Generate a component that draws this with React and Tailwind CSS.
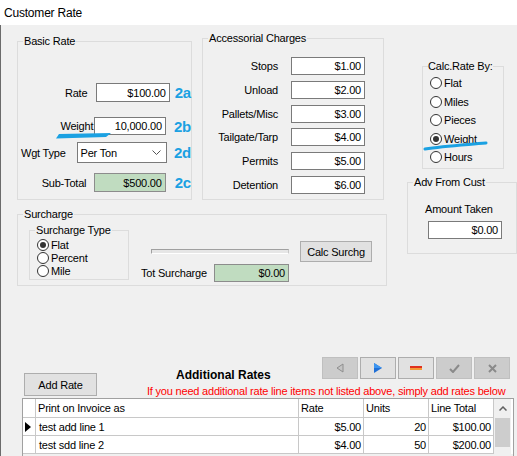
import React from 'react';

function Legend({ children }) {
  return <legend className="ml-[5px] px-[1px] leading-[14px]">{children}</legend>;
}

function Box({ value, className = '', green }) {
  return (
    <div className={`flex items-center justify-end border pr-[3px] ${green ? 'bg-[#c0dcc0] border-[#8c8c8c]' : 'bg-white border-[#7a7a7a]'} ${className}`}>
      {value}
    </div>
  );
}

function Radio({ label, checked, className = '' }) {
  return (
    <div className={`flex items-center ${className}`}>
      <span className="w-[12px] h-[12px] rounded-full border border-[#333333] bg-white flex items-center justify-center shrink-0">
        {checked && <span className="w-[6px] h-[6px] rounded-full bg-[#333333]" />}
      </span>
      <span className="ml-[2px]">{label}</span>
    </div>
  );
}

function Mark({ children, className = '' }) {
  return <span className={`font-bold text-[15px] leading-none text-[#1ba1e2] ${className}`}>{children}</span>;
}

function NavButton({ enabled, children }) {
  return (
    <div className={`w-[36px] h-[22px] border flex items-center justify-center ${enabled ? 'bg-[#e1e1e1] border-[#adadad]' : 'bg-[#cccccc] border-[#bfbfbf]'}`}>
      {children}
    </div>
  );
}

const accessorials = [
  ['Stops', '$1.00'],
  ['Unload', '$2.00'],
  ['Pallets/Misc', '$3.00'],
  ['Tailgate/Tarp', '$4.00'],
  ['Permits', '$5.00'],
  ['Detention', '$6.00'],
];

const rows = [
  { text: 'test add line 1', rate: '$5.00', units: '20', total: '$100.00', current: true },
  { text: 'test sdd line 2', rate: '$4.00', units: '50', total: '$200.00' },
];

export default function App() {
  return (
    <div className="relative w-[517px] h-[456px] overflow-hidden bg-white text-black text-[11px] tracking-[-0.2px] font-['Liberation_Sans',Arial,sans-serif]">
      {/* Title */}
      <div className="h-[25px] bg-white flex items-center pl-[4px] text-[12px] tracking-[-0.2px]">Customer Rate</div>

      <div className="h-[431px] bg-[#f0f0f0] border-l border-[#6b6b6b] pl-[16px] leading-[14px]">
        <div className="flex items-start">
          {/* Left column */}
          <div className="w-[370px]">
            <div className="flex items-start">
              <fieldset className="w-[175px] h-[166px] mt-[9px] border border-[#dcdcdc] min-w-0">
                <Legend>Basic Rate</Legend>
                <div className="flex items-center h-[19px] mt-[35px]">
                  <div className="w-[79px] text-right pr-[9px]">Rate</div>
                  <Box value="$100.00" className="w-[74px] h-[19px]" />
                  <Mark className="ml-[5px]">2a</Mark>
                </div>
                <div className="flex items-center h-[18px] mt-[15px]">
                  <div className="w-[79px] text-right pr-[1px]">Weight</div>
                  <Box value="10,000.00" className="w-[74px] h-[18px]" />
                  <Mark className="ml-[8px]">2b</Mark>
                </div>
                <div className="flex items-center h-[21px] mt-[7px]">
                  <div className="w-[61px] pl-[3px]">Wgt Type</div>
                  <div className="w-[94px] h-[21px] bg-white border border-[#7a7a7a] flex items-center pl-[3px] pr-[5px]">
                    <span className="flex-1">Per Ton</span>
                    <svg width="9" height="6" viewBox="0 0 9 6">
                      <polyline points="0.5,0.5 4.5,4.5 8.5,0.5" fill="none" stroke="#555" strokeWidth="1" />
                    </svg>
                  </div>
                  <Mark className="ml-[7px]">2d</Mark>
                </div>
                <div className="flex items-center h-[19px] mt-[10px]">
                  <div className="w-[79px] text-right pr-[8px]">Sub-Total</div>
                  <Box value="$500.00" green className="w-[74px] h-[19px]" />
                  <Mark className="ml-[9px]">2c</Mark>
                </div>
              </fieldset>

              <fieldset className="w-[182px] h-[169px] mt-[6px] ml-[10px] border border-[#dcdcdc] min-w-0">
                <Legend>Accessorial Charges</Legend>
                <div className="flex flex-col gap-[5.8px] mt-[12px]">
                  {accessorials.map(([label, value]) => (
                    <div key={label} className="flex items-center h-[18px]">
                      <div className="w-[88px] text-right pr-[13px]">{label}</div>
                      <Box value={value} className="w-[74px] h-[18px]" />
                    </div>
                  ))}
                </div>
              </fieldset>
            </div>

            <fieldset className="w-[370px] h-[79px] mt-[7px] border border-[#dcdcdc] min-w-0">
              <Legend>Surcharge</Legend>
              <div className="flex items-start">
                <fieldset className="w-[100px] h-[57px] ml-[11px] mt-[2px] border border-[#dcdcdc] min-w-0">
                  <Legend>Surcharge Type</Legend>
                  <div className="pl-[7px] mt-[1.5px]">
                    <Radio label="Flat" checked className="h-[13px]" />
                    <Radio label="Percent" className="h-[13px]" />
                    <Radio label="Mile" className="h-[13px]" />
                  </div>
                </fieldset>
                <div className="ml-[12px] mt-[20px]">
                  <div className="flex items-start h-[21px]">
                    <div className="ml-[10px] mt-[8px] w-[138px] h-[5px] border-t border-l border-[#a0a0a0] border-b border-r border-b-white border-r-[#c8c8c8] bg-[#e6e6e6]" />
                    <div className="ml-[11px] w-[72px] h-[21px] bg-[#e1e1e1] border border-[#adadad] flex items-center justify-center">Calc Surchg</div>
                  </div>
                  <div className="flex items-center h-[18px] mt-[2px]">
                    <div className="w-[73px]">Tot Surcharge</div>
                    <Box value="$0.00" green className="w-[75px] h-[18px]" />
                  </div>
                </div>
              </div>
            </fieldset>
          </div>

          {/* Right column */}
          <div className="ml-[20px] w-[110px]">
            <fieldset className="w-[82px] h-[110px] ml-[15px] mt-[34px] border border-[#dcdcdc] min-w-0">
              <legend className="ml-[5px] leading-[14px]">Calc.Rate By:</legend>
              <div className="pl-[7px] mt-[1px]">
                {['Flat', 'Miles', 'Pieces', 'Weight', 'Hours'].map((r) => (
                  <Radio key={r} label={r} checked={r === 'Weight'} className="h-[18.5px]" />
                ))}
              </div>
            </fieldset>
            <fieldset className="w-[110px] h-[79px] mt-[6px] border border-[#dcdcdc] min-w-0">
              <Legend>Adv From Cust</Legend>
              <div className="pl-[17px] mt-[13px]">Amount Taken</div>
              <Box value="$0.00" className="ml-[20px] mt-[5px] w-[74px] h-[18px]" />
            </fieldset>
          </div>
        </div>

        {/* Additional rates */}
        <div className="flex items-start mt-[71px]">
          <div className="ml-[7px] mt-[16px] w-[73px] h-[23px] bg-[#e1e1e1] border border-[#adadad] flex items-center justify-center">Add Rate</div>
          <div className="ml-[50px] flex-1 pr-[7px]">
            <div className="flex h-[22px]">
              <div className="ml-[29px] self-end translate-y-[3px] font-bold text-[12px] tracking-normal">Additional Rates</div>
              <div className="ml-auto flex gap-[2px]">
                <NavButton>
                  <svg width="8" height="10" viewBox="0 0 8 10">
                    <polygon points="7,1 7,9 1,5" fill="#c4c4c4" stroke="#8e8e8e" strokeWidth="1" />
                  </svg>
                </NavButton>
                <NavButton enabled>
                  <svg width="8" height="10" viewBox="0 0 8 10">
                    <polygon points="0,0 8,5 0,10" fill="#1f6fd6" />
                    <polygon points="0,0 8,5 0,5" fill="#3d95f0" />
                  </svg>
                </NavButton>
                <NavButton enabled>
                  <svg width="12" height="4" viewBox="0 0 12 4">
                    <rect x="0" y="0" width="12" height="2" fill="#e0301e" />
                    <rect x="0" y="2" width="12" height="2" fill="#f29b38" />
                  </svg>
                </NavButton>
                <NavButton>
                  <svg width="11" height="9" viewBox="0 0 11 9">
                    <polyline points="1,5 4,8 10,1" fill="none" stroke="#8a8a8a" strokeWidth="2" />
                  </svg>
                </NavButton>
                <NavButton>
                  <svg width="9" height="9" viewBox="0 0 9 9">
                    <path d="M1 1 L8 8 M8 1 L1 8" stroke="#8a8a8a" strokeWidth="2" />
                  </svg>
                </NavButton>
              </div>
            </div>
            <div className="mt-[6px] leading-[13px] text-[#ff0000] whitespace-nowrap">
              If you need additional rate line items not listed above, simply add rates below
            </div>
          </div>
        </div>

        <div className="ml-[5px] w-[492px] h-[70px] border border-[#a0a0a0] bg-[#f0f0f0] flex">
          <div className="w-[471px]">
            <div className="flex h-[19px] bg-white border-b border-[#c8c8c8]">
              <div className="w-[13px] border-r border-[#c8c8c8]" />
              <div className="w-[263px] border-r border-[#c8c8c8] pl-[2px] flex items-center">Print on Invoice as</div>
              <div className="w-[65px] border-r border-[#c8c8c8] pl-[2px] flex items-center">Rate</div>
              <div className="w-[65px] border-r border-[#c8c8c8] pl-[2px] flex items-center">Units</div>
              <div className="w-[65px] border-r border-[#c8c8c8] pl-[2px] flex items-center">Line Total</div>
            </div>
            {rows.map((r) => (
              <div key={r.text} className="flex h-[18px] bg-white border-b border-[#c8c8c8]">
                <div className="w-[13px] border-r border-[#c8c8c8] flex items-center pl-[2px]">
                  {r.current && (
                    <svg width="6" height="10" viewBox="0 0 6 10">
                      <polygon points="0,0 6,5 0,10" fill="#000" />
                    </svg>
                  )}
                </div>
                <div className="w-[263px] border-r border-[#c8c8c8] pl-[3px] flex items-center">{r.text}</div>
                <div className="w-[65px] border-r border-[#c8c8c8] pr-[2px] flex items-center justify-end">{r.rate}</div>
                <div className="w-[65px] border-r border-[#c8c8c8] pr-[2px] flex items-center justify-end">{r.units}</div>
                <div className="w-[65px] border-r border-[#c8c8c8] pr-[2px] flex items-center justify-end">{r.total}</div>
              </div>
            ))}
          </div>
          <div className="w-[17px] bg-[#f0f0f0] flex flex-col items-center">
            <div className="h-[19px] flex items-center justify-center">
              <svg width="8" height="5" viewBox="0 0 8 5">
                <polyline points="0.5,4.5 4,1 7.5,4.5" fill="none" stroke="#606060" strokeWidth="1.5" />
              </svg>
            </div>
            <div className="w-[15px] h-[29px] bg-[#cdcdcd]" />
          </div>
          <div className="w-[2px] h-[55px] bg-white" />
        </div>
      </div>

      {/* hand-drawn annotations */}
      <svg className="absolute left-[54px] top-[133px]" width="60" height="7" viewBox="0 0 60 7">
        <polygon points="5,1 57,0 52,4 2,5.5" fill="#1ba1e2" />
      </svg>
      <svg className="absolute left-[423px] top-[141px]" width="66" height="10" viewBox="0 0 66 10">
        <path d="M2 8 C 20 5, 40 4, 63 2" stroke="#1ba1e2" strokeWidth="3" fill="none" strokeLinecap="round" />
      </svg>
    </div>
  );
}
